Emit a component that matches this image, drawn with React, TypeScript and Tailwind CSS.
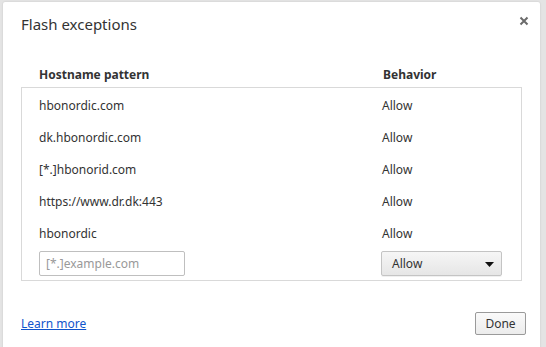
const rows = [
  'hbonordic.com',
  'dk.hbonordic.com',
  '[*.]hbonorid.com',
  'https://www.dr.dk:443',
  'hbonordic',
];

function CloseIcon() {
  return (
    <svg width="10" height="10" viewBox="0 0 10 10" aria-hidden="true">
      <path d="M1.5 1.5 L8.5 8.5 M8.5 1.5 L1.5 8.5" stroke="#6b6b6b" strokeWidth="2" />
    </svg>
  );
}

export default function App() {
  return (
    <div
      className="w-[546px] h-[347px] bg-[#e4e4e4] pl-[3px] pt-[2px] pr-[6px] overflow-hidden text-[#333]"
      style={{ fontFamily: '"Noto Sans", "Open Sans", sans-serif' }}
    >
      <div className="relative h-[360px] bg-white rounded-t-[2px] shadow-[0_0_2px_rgba(0,0,0,0.15)] px-[18px]">
        <button className="absolute right-[9px] top-[12px] p-[2px]">
          <CloseIcon />
        </button>

        <h1 className="pt-[12px] text-[15px] leading-[20px] text-[#333]">Flash exceptions</h1>

        <div className="mt-[32px] flex text-[12px] font-bold leading-[18px] text-[#333]">
          <div className="w-[362px] pl-[18px]">Hostname pattern</div>
          <div>Behavior</div>
        </div>

        <div className="mt-[3px] h-[194px] border border-[#d9d9d9] pt-[2px] text-[12px] text-[#333]">
          {rows.map((r) => (
            <div key={r} className="flex h-[32px] items-center">
              <div className="w-[360px] pl-[17px]">{r}</div>
              <div>Allow</div>
            </div>
          ))}
          <div className="flex h-[26px] items-center">
            <div className="w-[360px] pl-[17px]">
              <input
                placeholder="[*.]example.com"
                className="w-[146px] h-[25px] rounded-[2px] border border-[#bfbfbf] px-[6px] text-[12px] placeholder:text-[#999] outline-none"
              />
            </div>
            <div className="relative mt-[1px] flex h-[25px] w-[121px] items-center rounded-[2px] border border-[#c4c4c4] bg-gradient-to-b from-[#f6f6f6] to-[#e6e6e6] pl-[10px] shadow-[0_1px_0_rgba(0,0,0,0.06)] -ml-[1px]">
              Allow
              <svg className="absolute right-[7px] top-[10px]" width="9" height="5" viewBox="0 0 9 5" aria-hidden="true">
                <path d="M0 0 H9 L4.5 5 Z" fill="#111" />
              </svg>
            </div>
          </div>
        </div>

        <div className="mt-[31px] flex items-center justify-between">
          <a href="#" className="text-[12px] text-[#1155cc] underline">
            Learn more
          </a>
          <button className="h-[23px] w-[51px] rounded-[2px] border border-[#9a9a9a] bg-gradient-to-b from-[#fafafa] to-[#ececec] text-[12px] text-[#333] -mr-[4px]">
            Done
          </button>
        </div>
      </div>
    </div>
  );
}
